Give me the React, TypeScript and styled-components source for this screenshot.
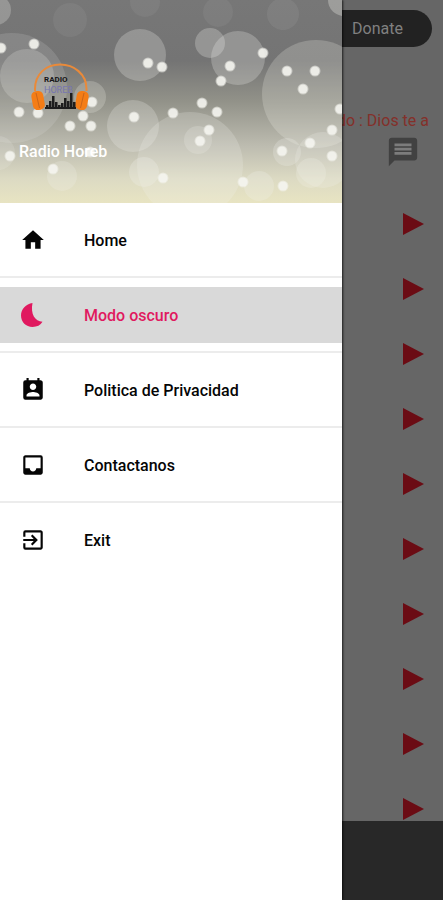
import React from "react";
import styled, { createGlobalStyle } from "styled-components";
import {
  MdExitToApp,
  MdHome,
  MdInbox,
  MdMessage,
  MdPermContactCalendar,
} from "react-icons/md";

const GlobalStyle = createGlobalStyle`
  *, *::before, *::after { box-sizing: border-box; }
  body { margin: 0; font-family: Roboto, "Liberation Sans", sans-serif; background: #666666; }
`;

const Screen = styled.div`
  position: relative;
  height: 100vh;
  overflow: hidden;
`;

const Page = styled.main`
  display: flex;
  flex-direction: column;
  height: 100%;
  background: #666666;
`;

const TopBar = styled.header`
  display: flex;
  justify-content: flex-end;
  padding: 10px 11px 0;
`;

const DonateButton = styled.button`
  height: 37px;
  padding: 0 29px;
  border: 0;
  border-radius: 19px;
  background: #222222;
  color: #808080;
  font: 400 16px/20px Roboto, sans-serif;
`;

const Ticker = styled.p`
  margin: 63px 0 0;
  padding: 0 14px;
  color: #84302a;
  font-size: 16px;
  line-height: 22px;
  text-align: right;
  white-space: nowrap;
`;

const Actions = styled.div`
  display: flex;
  justify-content: flex-end;
  padding: 3px 23px 0;
`;

const IconButton = styled.button`
  display: flex;
  padding: 0;
  border: 0;
  background: none;
  color: #414141;
`;

const MessageButton = styled(IconButton)`
  background: linear-gradient(#7c7c7c, #7c7c7c) center 8px / 20px 13px no-repeat;
`;

const Stations = styled.ul`
  flex: 1;
  min-height: 0;
  margin: 0;
  padding: 22px 19px 0;
  overflow: hidden;
  list-style: none;
`;

const Station = styled.li`
  display: flex;
  align-items: center;
  justify-content: flex-end;
  height: 65px;
`;

const PlayerBar = styled.footer`
  height: 79px;
  background: #282828;
`;

const Drawer = styled.aside`
  position: absolute;
  inset: 0 auto 0 0;
  width: calc(100% - 101px);
  max-width: 400px;
  background: #ffffff;
  box-shadow: 1px 0 2px rgba(0, 0, 0, 0.7);
`;

const Banner = styled.div`
  position: relative;
  display: flex;
  flex-direction: column;
  gap: 30px;
  height: 203px;
  padding: 62px 19px 0;
  overflow: hidden;
  background: linear-gradient(#777777 0, #747474 30%, #929289 50%, #bdbcb0 72%, #dcdac3 88%, #e8e4c2 100%);
`;

const Bokeh = styled.svg`
  position: absolute;
  inset: 0;
  width: 100%;
  height: 100%;
`;

const Logo = styled.svg`
  position: relative;
  width: 60px;
  height: 50px;
  margin-left: 11px;
`;

const AppName = styled.h1`
  position: relative;
  margin: 0;
  color: #ffffff;
  font-size: 16px;
  font-weight: 500;
  line-height: 20px;
`;

const Menu = styled.ul`
  margin: 0;
  padding: 0;
  list-style: none;
`;

const MenuRow = styled.li`
  padding: 9px 0 8px;
  border-bottom: 2px solid #ececec;

  &:last-child {
    border-bottom-color: transparent;
  }
`;

const MenuLink = styled.a<{ $active?: boolean }>`
  display: flex;
  align-items: center;
  gap: 38px;
  height: 56px;
  padding: 0 20px;
  background: ${(p) => (p.$active ? "#d9d9d9" : "transparent")};
  color: ${(p) => (p.$active ? "#e0195f" : "#050505")};
  font-size: 16px;
  font-weight: 500;
  line-height: 20px;
  text-decoration: none;
`;

const MenuLabel = styled.span`
  padding-top: 2px;
`;

const IconSlot = styled.span`
  display: flex;
  justify-content: center;
  width: 26px;
`;

const haze: [number, number, number, number][] = [
  [12, 88, 55, 0.14],
  [27, 76, 27, 0.2],
  [-4, 10, 15, 0.25],
  [140, 55, 26, 0.25],
  [133, 126, 26, 0.24],
  [90, 97, 16, 0.22],
  [144, 172, 15, 0.25],
  [62, 176, 15, 0.2],
  [-2, 153, 17, 0.16],
  [70, 20, 17, 0.06],
  [145, 2, 15, 0.06],
  [210, 43, 15, 0.26],
  [238, 58, 27, 0.25],
  [344, 0, 16, 0.3],
  [316, 94, 54, 0.22],
  [190, 165, 53, 0.2],
  [198, 140, 14, 0.2],
  [287, 152, 14, 0.24],
  [259, 186, 15, 0.24],
  [311, 173, 15, 0.22],
  [323, 160, 28, 0.2],
  [218, 12, 15, 0.06],
  [283, 14, 16, 0.07],
];

const sparks: [number, number][] = [
  [1, 48], [34, 44], [148, 63], [162, 67], [19, 112], [38, 113], [92, 102],
  [83, 116], [70, 126], [91, 126], [134, 117], [173, 113], [10, 156],
  [53, 169], [163, 178], [90, 152], [263, 53], [230, 66], [221, 81],
  [202, 103], [217, 112], [209, 130], [200, 141], [287, 71], [315, 71],
  [303, 89], [340, 109], [332, 130], [310, 143], [332, 156], [282, 151],
  [243, 182], [283, 186],
];

// Column x, column height for the equalizer in the logo.
const bars: [number, number][] = [
  [16, 3], [19, 7], [22, 12], [25, 6], [28, 3], [31, 5], [34, 10], [37, 7],
  [40, 15], [43, 6],
];

function MoonIcon() {
  return (
    <svg width="26" height="26" viewBox="0 0 26 26" fill="currentColor" aria-hidden="true">
      <path d="M12.500 1C6 2 1 7 1 13.500C1 20 6 25 12.500 25C17 25 20.500 23.200 22.500 19.800C15 19.500 10.300 12 12.500 1Z" />
    </svg>
  );
}

const menu = [
  { label: "Home", icon: <MdHome size={26} /> },
  { label: "Modo oscuro", icon: <MoonIcon />, active: true },
  { label: "Politica de Privacidad", icon: <MdPermContactCalendar size={26} /> },
  { label: "Contactanos", icon: <MdInbox size={26} /> },
  { label: "Exit", icon: <MdExitToApp size={26} /> },
];

function BannerArt() {
  return (
    <Bokeh viewBox="0 0 342 203" preserveAspectRatio="xMidYMid slice" aria-hidden="true">
      {haze.map(([x, y, r, o]) => (
        <circle key={`${x}-${y}`} cx={x} cy={y} r={r} fill="#f4f4ee" fillOpacity={o} />
      ))}
      {sparks.map(([x, y]) => (
        <g key={`${x}-${y}`} fill="#f5f5f0">
          <circle cx={x} cy={y} r="5.5" fillOpacity="0.5" />
          <circle cx={x} cy={y} r="4.5" fillOpacity="0.8" />
        </g>
      ))}
    </Bokeh>
  );
}

function RadioLogo() {
  return (
    <Logo viewBox="0 0 60 50" role="img" aria-label="Radio Horeb">
      <path d="M5 29V27C5 12 16 2.500 30 2.500S56.500 12 56.500 27V29" fill="none" stroke="#e98a3a" strokeWidth="2" />
      <g fill="#f47d16">
        <rect x="2" y="29" width="12" height="19" rx="5" transform="rotate(-10 8 38)" />
        <rect x="46" y="29" width="12" height="19" rx="5" transform="rotate(10 52 38)" />
      </g>
      <path d="M6 31l3.500 15M54 31l-3.500 15" stroke="#c9651a" strokeWidth="1" fill="none" />
      <g fill="#1d1d1d">
        {bars.map(([x, h]) => (
          <rect key={x} x={x} y={46 - h} width="2.500" height={h} />
        ))}
        <rect x="15" y="45" width="31" height="2" />
      </g>
      <text x="14" y="20" fontFamily="Roboto, sans-serif" fontSize="8" fontWeight="700" fill="#161616">
        RADIO
      </text>
      <text x="14" y="31" fontFamily="Roboto, sans-serif" fontSize="9" fontWeight="400" fill="#7676b0">
        HOREB
      </text>
    </Logo>
  );
}

export default function App() {
  return (
    <Screen>
      <GlobalStyle />
      <Page>
        <TopBar>
          <DonateButton type="button">Donate</DonateButton>
        </TopBar>
        <Ticker>do : Dios te a</Ticker>
        <Actions>
          <MessageButton type="button" aria-label="Messages">
            <MdMessage size={34} />
          </MessageButton>
        </Actions>
        <Stations>
          {Array.from({ length: 10 }, (_, i) => (
            <Station key={i}>
              <IconButton type="button" aria-label={`Play station ${i + 1}`}>
                <svg width="21" height="22" viewBox="0 0 21 22" aria-hidden="true">
                  <path d="M0 0L21 11L0 22Z" fill="#6b0c14" />
                </svg>
              </IconButton>
            </Station>
          ))}
        </Stations>
        <PlayerBar />
      </Page>
      <Drawer>
        <Banner>
          <BannerArt />
          <RadioLogo />
          <AppName>Radio Horeb</AppName>
        </Banner>
        <nav>
          <Menu>
            {menu.map(({ label, icon, active }) => (
              <MenuRow key={label}>
                <MenuLink href="#" $active={active} aria-current={active ? "page" : undefined}>
                  <IconSlot>{icon}</IconSlot>
                  <MenuLabel>{label}</MenuLabel>
                </MenuLink>
              </MenuRow>
            ))}
          </Menu>
        </nav>
      </Drawer>
    </Screen>
  );
}
